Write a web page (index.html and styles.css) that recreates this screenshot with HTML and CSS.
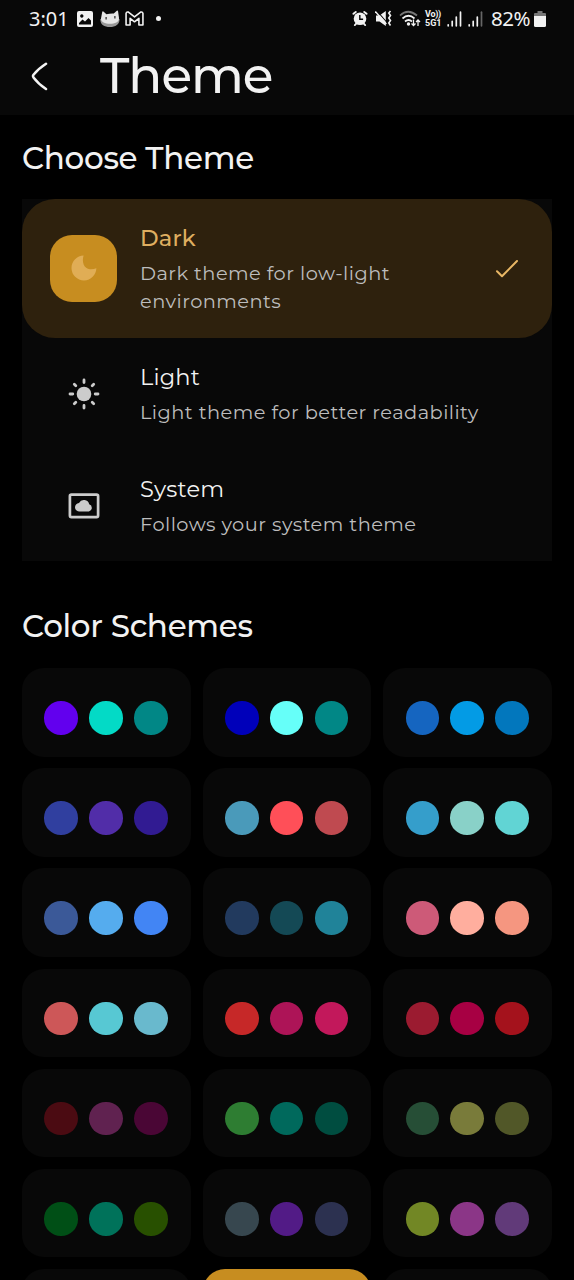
FILE: index.html
```
<!DOCTYPE html>
<html lang="en">
<head>
<meta charset="utf-8">
<title>Theme</title>
<link rel="stylesheet" href="styles.css">
</head>
<body>
<div class="screen">
  <header class="top">
    <div class="status">
      <div class="status-left">
        <span class="clock">3:01</span>
        <svg class="ic-photo" width="16" height="16" viewBox="0 0 16 16"><path fill="#f2f2f2" fill-rule="evenodd" d="M2 0h12a2 2 0 0 1 2 2v12a2 2 0 0 1-2 2H2a2 2 0 0 1-2-2V2a2 2 0 0 1 2-2zM2 13.500h12V9.500l-2.500-2.500L8 10.500 5.500 8.500 2 12zM4.800 3.300a1.700 1.700 0 1 0 .01 0z"/></svg>
        <svg class="ic-cat" width="20" height="17" viewBox="0 0 20 17"><path fill="#999" d="M.3 9c0 6 4 8 9.500 8s10-2.500 9.700-8z"/><path fill="#e6e6e6" d="M2.200 2Q2.700.8 3.700 1.800l2.700 2.400q4-.8 7.400-.6L16.800.8q1-.6 1.300.6l.9 6.600c.2 4.300-4.200 5.700-9 5.700S.9 12.300 1 8.500z"/><path fill="#222" d="M5.500 7h1.200v2.600H5.500zM14.300 6h1.200v2.600h-1.200z"/></svg>
        <svg class="ic-mail" width="19" height="15" viewBox="0 0 20 16"><path fill="none" stroke="#f2f2f2" stroke-width="1.700" stroke-linejoin="round" d="M1 15V2.500Q1.500.5 3.500 1.200L10 6.300l6.500-5.100Q18.500.5 19 2.500V15h-4.300V7.800L10 11.500 5.300 7.800V15z"/></svg>
        <span class="dot"></span>
      </div>
      <div class="status-right">
        <svg width="16" height="17" viewBox="0 0 17 17"><path stroke="#f2f2f2" stroke-width="2" stroke-linecap="round" d="M1.500 3.500 4 1.500M15.500 3.500 13 1.500M3 15.500l1.500-1.500M14 15.500 12.500 14"/><circle cx="8.500" cy="8.800" r="6.700" fill="#f2f2f2"/><path fill="none" stroke="#080808" stroke-width="1.500" d="M8.300 4.800v4.500h3.500"/></svg>
        <svg class="ic-mute" width="17" height="17" viewBox="0 0 17 17"><path fill="#f2f2f2" d="M1 5.500h3.500L10.800 1v15l-6.300-4.500H1z"/><path stroke="#080808" stroke-width="1.100" d="m2 1 10 11.500"/><path stroke="#f2f2f2" stroke-width="1.500" d="m.3 1.500 11 12.500"/><path fill="none" stroke="#f2f2f2" stroke-width="1.600" d="m15.500 1-1.700 2 1.700 2.500-1.700 2.500 1.700 2.500-1.700 2.500 1.700 2.500"/></svg>
        <svg class="ic-wifi" width="22" height="17" viewBox="0 0 22 17"><g fill="none" stroke-width="1.700"><path stroke="#777" d="M1 5.500q8-7.500 17 0"/><path stroke="#f2f2f2" d="M3.500 8.500q6-5.500 12 0M6 11.500q3.500-3 7 0"/></g><circle cx="9.500" cy="14" r="1.700" fill="#f2f2f2"/><path fill="none" stroke="#f2f2f2" stroke-width="1.300" d="M14.500 9.500v6M12.500 13.500l2 2 2-2M19 16v-6M17 12l2-2 2 2"/></svg>
        <span class="volte"><span class="vo">Vo))</span><span>5G1</span></span>
        <svg class="ic-sig" width="15" height="16" viewBox="0 0 15 16"><path stroke="#f2f2f2" stroke-width="1.700" stroke-linecap="round" d="M1.200 14.800v-1M5.200 14.800v-4.500M9.300 14.800V6M13.500 14.800V1.200"/></svg>
        <svg class="ic-sig2" width="15" height="16" viewBox="0 0 15 16"><path stroke="#f2f2f2" stroke-width="1.700" stroke-linecap="round" d="M1.200 14.800v-1M5.200 14.800v-4.500M9.300 14.800V6"/><path stroke="#666" stroke-width="1.700" stroke-linecap="round" d="M13.500 14.800V1.200"/></svg>
        <span class="pct">82%</span>
        <svg class="ic-bat" width="12" height="16" viewBox="0 0 12 16"><path fill="#777" d="M3.500 0h5v2H11q1 0 1 1v2H0V3q0-1 1-1h2.500z"/><path fill="#f2f2f2" d="M0 5h12v9.500q0 1.500-1.500 1.500h-9Q0 16 0 14.500z"/></svg>
      </div>
    </div>
    <div class="bar">
      <svg class="back" width="18" height="30" viewBox="0 0 18 30"><path fill="none" stroke="#f4f4f4" stroke-width="2.500" stroke-linecap="round" stroke-linejoin="round" d="M15 2.800 Q7 8 2.500 13.800q-1 1.300 0 2.600Q7 22.500 15 28"/></svg>
      <h1 class="title">Theme</h1>
    </div>
  </header>
  <main class="content">
    <h2 class="heading h-choose">Choose Theme</h2>
    <section class="options">
      <div class="option selected">
        <div class="tile"><svg width="26" height="26" viewBox="0 0 26 26"><path fill="#e0ad55" d="M12.600.5C10.500 7 13 13.800 19 14.300q3.500.2 6.400-1C25 20 20 25.500 13 25.500A12.500 12.500 0 0 1 .5 13C.5 6 6 .8 12.600.5z"/></svg></div>
        <div class="text"><div class="name n-dark">Dark</div><div class="desc">Dark theme for low-light<br>environments</div></div>
        <svg class="check" width="24" height="20" viewBox="0 0 24 20"><path fill="none" stroke="#e9b765" stroke-width="2" stroke-linecap="round" stroke-linejoin="round" d="m2 12.300 5 4.900L22 2"/></svg>
      </div>
      <div class="option">
        <div class="tile"><svg width="32" height="32" viewBox="0 0 32 32"><circle cx="16" cy="16" r="7.300" fill="#ccc"/><path stroke="#ccc" stroke-width="2.800" stroke-linecap="round" d="M16 2v2.500M16 27.500V30M2 16h2.800M27.200 16H30M6.300 6.300 7.800 7.800M24.200 24.200l1.500 1.500M6.300 25.700l1.500-1.500M24.200 7.800l1.500-1.500"/></svg></div>
        <div class="text"><div class="name">Light</div><div class="desc">Light theme for better readability</div></div>
      </div>
      <div class="option">
        <div class="tile"><svg width="32" height="26" viewBox="0 0 32 26"><rect x="1.900" y="1.700" width="28.200" height="22.400" rx="1.500" fill="none" stroke="#ccc" stroke-width="2.700"/><path fill="#ccc" d="M11.800 18.600a4.300 4.300 0 0 1-.8-8.700 5.500 5.500 0 0 1 10.200 1.400 3.800 3.800 0 0 1-.3 7.300z"/></svg></div>
        <div class="text"><div class="name">System</div><div class="desc">Follows your system theme</div></div>
      </div>
    </section>
    <h2 class="heading h-color">Color Schemes</h2>
    <section class="grid" id="grid"></section>
  </main>
</div>
<script src="schemes.js"></script>
</body>
</html>
```
FILE: schemes.js
```
const schemes = [
  ["#6200ee", "#03dac6", "#018786"], ["#0000ba", "#66fff9", "#018786"], ["#1565c0", "#039be5", "#0277bd"],
  ["#303f9f", "#512da8", "#311b92"], ["#4a9aba", "#ff4f58", "#bf4a50"], ["#359ecb", "#89d1c8", "#61d4d4"],
  ["#3b5998", "#55acee", "#4285f4"], ["#223a5e", "#144955", "#208399"], ["#cd5a78", "#ffae9e", "#f59680"],
  ["#cd5758", "#57c8d3", "#69b9cd"], ["#c62828", "#ad1457", "#c2185b"], ["#9b1b30", "#a70043", "#a4121c"],
  ["#4b0b12", "#602250", "#4a0635"], ["#2e7d32", "#00695c", "#004d40"], ["#264e36", "#797b3a", "#515728"],
  ["#004f16", "#00725a", "#285000"], ["#37474f", "#521b86", "#2c3150"], ["#728725", "#8b3687", "#613a79"],
  ["#080808", "#080808", "#080808"], ["#c78d20", "#8d6e3f", "#616247"], ["#080808", "#080808", "#080808"]
];
const active = 19;
const grid = document.getElementById("grid");
schemes.forEach((colors, i) => {
  const card = document.createElement("div");
  card.className = i === active ? "card active" : "card";
  colors.forEach(c => {
    const s = document.createElement("span");
    s.className = "swatch";
    s.style.background = c;
    card.appendChild(s);
  });
  grid.appendChild(card);
});
```
FILE: styles.css
```
* { box-sizing: border-box; margin: 0; padding: 0; }
html, body { background: #000; }
body { font-family: Montserrat, Inter, "Open Sans", sans-serif; color: #f2f2f2; }
svg { display: block; flex: none; }
.screen { width: 574px; height: 1280px; overflow: hidden; background: #000; }
.top { height: 115px; background: #080808; }
.status { height: 37px; display: flex; justify-content: space-between; padding: 0 28px 0 29px; font-family: Roboto, "Noto Sans", sans-serif; }
.status-left, .status-right { display: flex; align-items: center; }
.clock { font-size: 20px; width: 48px; white-space: nowrap; font-family: "Noto Sans", sans-serif; font-weight: 370; padding-bottom: 1px; }
.ic-cat { margin-left: 7px; }
.ic-mail { margin-left: 5px; }
.dot { width: 5px; height: 5px; border-radius: 50%; background: #f2f2f2; margin-left: 12px; }
.ic-mute { margin-left: 7px; }
.ic-wifi { margin-left: 7px; }
.volte { margin-left: 4px; width: 17px; display: flex; flex-direction: column; gap: 1px; font: 700 9px/8px Roboto, sans-serif; white-space: nowrap; }
.vo { letter-spacing: -0.3px; }
.ic-sig { margin-left: 5px; }
.ic-sig2 { margin-left: 6px; }
.pct { font-size: 20.500px; font-family: "Noto Sans", sans-serif; font-weight: 370; margin-left: 8px; width: 43px; white-space: nowrap; letter-spacing: -0.5px; padding-bottom: 2px; }
.bar { height: 78px; display: flex; align-items: center; padding-left: 31px; }
.title { font-size: 50px; font-weight: 500; line-height: 60px; margin-left: 51px; letter-spacing: -1px; }
.content { padding: 0 22px; }
.heading { font-size: 31px; font-weight: 500; line-height: 40px; letter-spacing: -0.300px; }
.h-choose { padding-top: 22.500px; height: 84px; }
.h-color { padding-top: 45px; height: 107px; }
.options { background: #080808; height: 362px; }
.option { height: 112px; display: flex; align-items: center; padding: 0 32px 0 28px; border-radius: 33px; }
.selected { height: 138.500px; background: #2e210d; padding-right: 33px; }
.tile { width: 67px; height: 67px; border-radius: 22px; display: flex; align-items: center; justify-content: center; }
.selected .tile { background: #c78d20; }
.text { margin-left: 23px; flex: 1; white-space: nowrap; }
.name { font-size: 22.500px; line-height: 33px; letter-spacing: 0.200px; }
.desc { font-size: 19.400px; line-height: 28px; font-weight: 400; color: #bdbdbd; padding: 4px 0 1px; letter-spacing: 0.450px; }
.selected .text { padding-top: 2px; }
.n-dark { color: #dfae60; font-weight: 500; }
.check { margin-top: 1px; }
.grid { display: grid; grid-template-columns: repeat(3, 1fr); grid-auto-rows: 88.500px; gap: 11.700px; }
.card { background: #080808; border-radius: 22px; display: flex; gap: 11.200px; padding: 33px 0 0 22.400px; }
.card.active { background: #c78d20; }
.swatch { width: 33.600px; height: 33.600px; border-radius: 50%; flex: none; }
```
